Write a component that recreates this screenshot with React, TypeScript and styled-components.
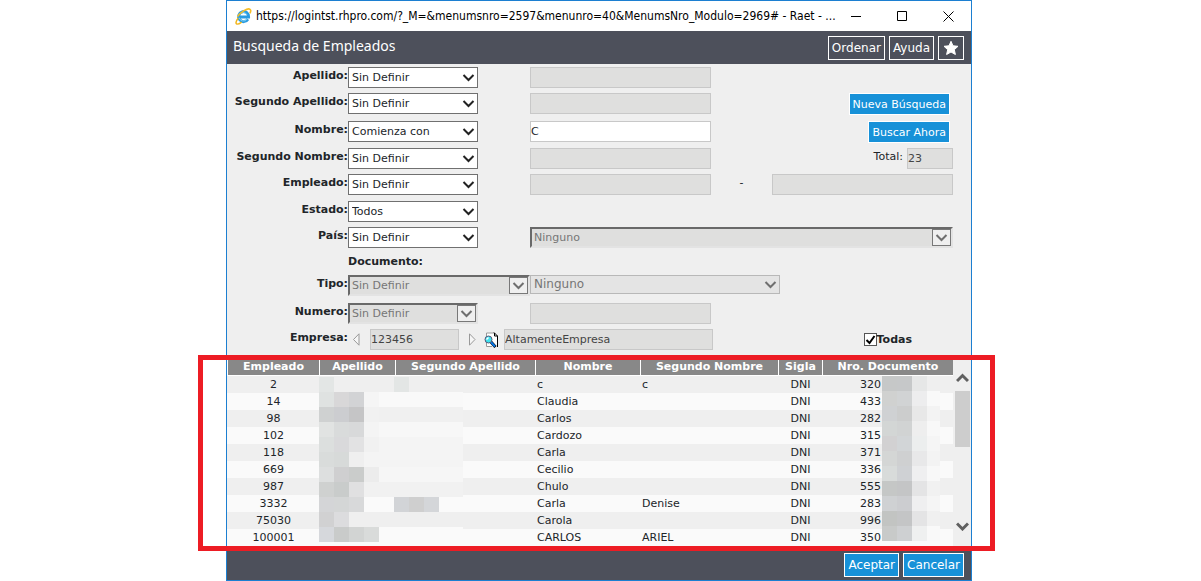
import React from "react";
import styled, { createGlobalStyle, css } from "styled-components";

const GlobalStyle = createGlobalStyle`
  *, *::before, *::after { box-sizing: border-box; }
  body {
    margin: 0;
    background: #fff;
    color: #212529;
    font: 11px/17px "DejaVu Sans", Verdana, sans-serif;
    overflow-x: hidden;
  }
  button, input, select { font: inherit; color: inherit; margin: 0; }
`;

const Page = styled.div`
  display: grid;
  grid-template-columns: minmax(0, 1fr) minmax(0, 746px) minmax(0, 1fr);
  padding-right: 3px;
`;

const Window = styled.main`
  grid-column: 2;
  border: 1px solid #1c7fd1;
  background: #efefef;
`;

const TitleBar = styled.header`
  display: flex;
  align-items: center;
  height: 30px;
  padding-left: 8px;
  background: #fff;
  color: #000;
`;

const Address = styled.span`
  flex: 1;
  min-width: 0;
  margin-left: 4px;
  font: 12px/18px "DejaVu Sans Condensed", Roboto, sans-serif;
  white-space: nowrap;
`;

const WindowButton = styled.button`
  display: grid;
  place-items: center;
  width: 46px;
  height: 28px;
  padding: 0;
  border: 0;
  background: none;
`;

const WindowButtons = styled.div`
  display: flex;
`;

const Bar = styled.div<{ $end?: boolean }>`
  display: flex;
  align-items: center;
  justify-content: ${(p) => (p.$end ? "flex-end" : "space-between")};
  height: ${(p) => (p.$end ? 29 : 33)}px;
  padding: 0 7px ${(p) => (p.$end ? 1 : 0)}px 6px;
  background: #4d505b;
  color: #fff;
`;

const Heading = styled.h1`
  margin: 0;
  padding-bottom: 3px;
  font: 14px/20px "Noto Sans", Tahoma, sans-serif;
`;

const Actions = styled.div`
  display: flex;
  gap: 4px;
`;

const BarButton = styled.button<{ $primary?: boolean }>`
  display: grid;
  place-items: center;
  height: 24px;
  min-width: 26px;
  padding: 0 3px;
  border: 1px solid #fff;
  background: ${(p) => (p.$primary ? "#1791d8" : "transparent")};
  font: 12px/20px "DejaVu Sans", Tahoma, sans-serif;
  color: #fff;
  white-space: nowrap;
`;

const Form = styled.form`
  padding: 3px 18px 0 0;
`;

const Row = styled.div<{ $h: number }>`
  display: grid;
  grid-template-columns: 121px 182px minmax(0, 1fr);
  align-items: start;
  height: ${(p) => p.$h}px;
`;

const Label = styled.label`
  font-weight: bold;
  text-align: right;
  white-space: nowrap;
`;

const Subheading = styled.strong`
  grid-column: 2;
`;

const Cell = styled.div<{ $wide?: boolean }>`
  display: flex;
  align-items: flex-start;
  min-width: 0;
  ${(p) => p.$wide && "grid-column: 2 / -1; align-items: center;"}
`;

const TextBox = styled.input<{ $w: number }>`
  flex: 0 1 ${(p) => p.$w}px;
  width: ${(p) => p.$w}px;
  min-width: 0;
  height: 21px;
  padding: 0;
  border: 1px solid #c8c8c8;
  border-radius: 0;
  background: #fff;
  &:disabled, &:read-only { background: #dfdfde; color: #444; }
`;

const Dash = styled.span`
  flex: 0 0 61px;
  text-align: center;
`;

type Look = "normal" | "inset" | "flat";

const SelectBox = styled.div<{ $w?: number }>`
  display: grid;
  align-items: center;
  justify-items: end;
  ${(p) => (p.$w ? `width: ${p.$w}px;` : "flex: 1; min-width: 0;")}
  > * { grid-area: 1 / 1; }
`;

const NativeSelect = styled.select<{ $look: Look }>`
  appearance: none;
  width: 100%;
  height: 21px;
  padding: 0 24px 0 3px;
  border: 1px solid #707070;
  border-radius: 0;
  background: #fff;
  line-height: 17px;
  opacity: 1;
  ${(p) =>
    p.$look === "inset" &&
    css`
      padding-left: 2px;
      border-width: 2px;
      border-color: #696969 #e3e3e3 #e3e3e3 #696969;
      background: #dfdfde;
      color: #767676;
    `}
  ${(p) =>
    p.$look === "flat" &&
    css`
      height: 19px;
      border-color: #b8b8b8;
      background: #e4e4e4;
      color: #767676;
      font-size: 12px;
    `}
`;

const Arrow = styled.span<{ $boxed: boolean }>`
  display: grid;
  place-items: center;
  width: 19px;
  height: 17px;
  pointer-events: none;
  ${(p) =>
    p.$boxed &&
    css`
      margin-right: 2px;
      border: 1px solid #787878;
      background: #efefef;
    `}
`;

const SearchButton = styled.button`
  height: 22px;
  margin: 0 3px 0 auto;
  padding: 0 3px;
  border: 1px solid #fff;
  background: #1791d8;
  color: #fff;
  white-space: nowrap;
`;

const Total = styled.label`
  margin: 0 4px 0 auto;
`;

const IconButton = styled.button<{ $w: number; $pad: number }>`
  display: grid;
  align-items: center;
  justify-content: start;
  width: ${(p) => p.$w}px;
  height: 21px;
  padding: 0 0 0 ${(p) => p.$pad}px;
  border: 0;
  background: none;
`;

const Check = styled.span`
  display: grid;
  margin-left: auto;
  > * { grid-area: 1 / 1; }
  svg { pointer-events: none; }
`;

const CheckInput = styled.input`
  appearance: none;
  width: 13px;
  height: 13px;
  border: 1px solid #555;
  background: #fff;
  & + svg { visibility: hidden; }
  &:checked + svg { visibility: visible; }
`;

const CheckLabel = styled.label`
  margin-right: 41px;
  font-weight: bold;
`;

const Results = styled.section`
  position: relative;
  display: flex;
  height: 196px;
  padding-top: 3px;
`;

const Table = styled.table`
  flex: 1;
  align-self: flex-start;
  min-width: 0;
  table-layout: fixed;
  border-spacing: 0;
`;

const Th = styled.th<{ $w?: number }>`
  ${(p) => p.$w && `width: ${p.$w}px;`}
  height: 18px;
  padding: 0;
  border: solid #fff;
  border-width: 0 0 1px 1px;
  background: #888;
  color: #fff;
  line-height: 17px;
`;

const Tr = styled.tr`
  background: #efefef;
  &:nth-child(even) { background: #fafafa; }
`;

const Td = styled.td<{ $left?: number }>`
  height: 17px;
  padding: 0 0 0 ${(p) => p.$left ?? 1}px;
  text-align: ${(p) => (p.$left === undefined ? "center" : "left")};
  white-space: nowrap;
`;

const Scroll = styled.div`
  display: flex;
  flex-direction: column;
  align-items: center;
  width: 17px;
  margin-left: 1px;
  padding: 12px 0 20px;
`;

const Thumb = styled.div`
  width: 15px;
  height: 56px;
  margin: 6px 0 auto;
  background: #cdcdcd;
`;

const Mosaic = styled.svg<{ $side: "left" | "right" }>`
  position: absolute;
  ${(p) => (p.$side === "left" ? "left: 92px; top: 22px;" : "right: 31px; top: 21px;")}
`;

const Highlight = styled.div`
  position: absolute;
  inset: 0 -24px 0 -29px;
  border: 5px solid #ed1c24;
  pointer-events: none;
`;

const Chevron = ({ color = "#222" }: { color?: string }) => (
  <svg width="13" height="9" viewBox="0 0 13 9" fill="none" stroke={color} strokeWidth="2">
    <path d="M1.5 2 6.5 7 11.5 2" />
  </svg>
);

const ExplorerIcon = () => (
  <svg width="17" height="17" viewBox="0 0 17 17" fill="none">
    <path d="M12.9 11.2A5 5 0 1 1 13.6 9H4.2" stroke="#2a9be0" strokeWidth="3" />
    <path d="M12.2 11A4.4 4.4 0 0 1 4.2 9.6M4.3 7.1A4.4 4.4 0 0 1 12.2 7" stroke="#7fd2f6" strokeWidth="1" />
    <path d="M3.3 10C.8 13.3.4 15.8 2 16.1c1.2.2 3-.8 4.6-2" stroke="#f1b51c" strokeWidth="1.5" />
    <path d="M2.5 8.5C5.6 4.2 12.6-.4 15 1.3c1.2.9.8 2.4-.2 4" stroke="#f5bd27" strokeWidth="1.6" />
  </svg>
);

const StarIcon = () => (
  <svg width="16" height="16" viewBox="0 0 16 16" fill="#fff" stroke="#fff" strokeLinejoin="round">
    <path d="M8 1.3 10 5.8 15 6.3 11.3 9.7 12.4 14.5 8 12 3.6 14.5 4.7 9.7 1 6.3 6 5.8Z" />
  </svg>
);

const StepIcon = ({ next = false }: { next?: boolean }) => (
  <svg width="7" height="13" viewBox="0 0 7 13" fill="#f6f6f6">
    <path d={next ? "M.5.8V12.2L6 6.5Z" : "M6 .8V12.2L.5 6.5Z"} stroke="#999" />
  </svg>
);

const LookupIcon = () => (
  <svg width="15" height="16" viewBox="0 0 15 16">
    <path d="M2.5 1H10.5L13 3.5V14.5H2.5Z" fill="#fff" />
    <path d="M2.5 4V1H10.5M2.5 11V14.5H8" fill="none" stroke="#999" />
    <path d="M10 .5 13.5 4V15M10.5 1V4H13.5" fill="none" stroke="#000" />
    <path d="M6.5 9.5 11.5 15" stroke="#000" strokeWidth="3" />
    <path d="M6 9 11 14.5" stroke="#0878e8" strokeWidth="2" />
    <circle cx="4.5" cy="7.5" r="3.5" fill="#3fe3ee" stroke="#557" />
    <path d="M2.5 7.5 4.5 5.5" stroke="#fff" strokeWidth="1.5" />
  </svg>
);

function Select({
  id,
  value,
  w,
  look = "normal",
  label,
}: {
  id?: string;
  value: string;
  w?: number;
  look?: Look;
  label?: string;
}) {
  return (
    <SelectBox $w={w}>
      <NativeSelect id={id} aria-label={label} $look={look} disabled={look !== "normal"}>
        <option>{value}</option>
      </NativeSelect>
      <Arrow $boxed={look === "inset"}>
        <Chevron color={look === "normal" ? "#222" : "#6f6f6f"} />
      </Arrow>
    </SelectBox>
  );
}

const columns: [string, number?][] = [
  ["Empleado", 92],
  ["Apellido", 76],
  ["Segundo Apellido", 140],
  ["Nombre", 105],
  ["Segundo Nombre", 138],
  ["Sigla", 44],
  ["Nro. Documento"],
];

const employees = [
  ["2", "c", "c", "320"],
  ["14", "Claudia", "", "433"],
  ["98", "Carlos", "", "282"],
  ["102", "Cardozo", "", "315"],
  ["118", "Carla", "", "371"],
  ["669", "Cecilio", "", "336"],
  ["987", "Chulo", "", "555"],
  ["3332", "Carla", "Denise", "283"],
  ["75030", "Carola", "", "996"],
  ["100001", "CARLOS", "ARIEL", "350"],
];

// Each line holds the tile colours from left to right; "-" leaves a tile clear
// and the first entry is the colour behind the whole strip.
const nameTiles = [
  "- e3e6e5 - - - - e3e6e5",
  "f9f9f9 dfe2e1 d8d7d8 d2d3d5 f5f5f5",
  "f0f0f0 cfd1d1 cccdd0 c5c5c6 f1f1f1",
  "f7f7f7 e1e3e2 d9dbdb d8d9da f4f4f4",
  "f4f4f4 dcdfde d9d9db e2e2e3 f1f1f1",
  "f4f4f4 d9dcdb d7dad9 efefef",
  "f6f6f6 dddfdf cfcfd0 cacccb ececec",
  "f1f1f1 cfd1d0 c9cccb e0e0e1",
  "fafafa d4d5d7 d4d6d6 d8d9da - - d2d4d7 cfcfcf d4d6d9",
  "efefef d1d1d2 dcdcde",
  "fafafa d6d8dc c9cbca d2d4d3 d9dbda",
];

const documentTiles = [
  "- c6c8c8 c6c8c9 e6e7e7 efefef",
  "- d0d1d0 d1d3d4 ededee f9f9f9",
  "- cfd1d3 cccdcd e8e8e8 f3f3f3",
  "- d3d6d5 d1d3d3 eeeeee f8f8f8",
  "- d2d1d2 d2d5d7 eceeee f5f5f5",
  "- d4d6d5 cfd0d1 e8e8e9 f3f3f3",
  "- d8dbda cfd1d4 efeff0 f8f8f8",
  "- c5c7c6 c4c5c6 e4e4e5 f1f1f1",
  "- cfd1d3 cccdd0 efeff0 f5f5f5",
  "- c2c4c2 c4c5c6 e4e4e5 f0f0f0",
  "- c8cac9 ced0d2 eff0f0 f9f9f9",
];

function Tiles({ rows, side, w }: { rows: string[]; side: "left" | "right"; w: number }) {
  return (
    <Mosaic $side={side} width={w} height={165} aria-hidden="true">
      {rows.map((line, y) => {
        const [back, ...tiles] = line.split(" ");
        return (
          <g key={y}>
            {back !== "-" && <rect y={y * 15} width={w} height={15} fill={`#${back}`} />}
            {tiles.map(
              (c, x) =>
                c !== "-" && (
                  <rect key={x} x={x * 15} y={y * 15} width={15} height={15} fill={`#${c}`} />
                )
            )}
          </g>
        );
      })}
    </Mosaic>
  );
}

export default function App() {
  return (
    <>
      <GlobalStyle />
      <Page>
        <Window>
          <TitleBar>
            <ExplorerIcon />
            <Address>
              https://logintst.rhpro.com/?_M=&amp;menumsnro=2597&amp;menunro=40&amp;MenumsNro_Modulo=2969# - Raet - ...
            </Address>
            <WindowButtons>
              <WindowButton aria-label="Minimizar">
                <svg width="11" height="11" stroke="#000"><path d="M0 5.5H10" /></svg>
              </WindowButton>
              <WindowButton aria-label="Maximizar">
                <svg width="11" height="11" stroke="#000" fill="none"><path d="M.5.5H9.5V9.5H.5Z" /></svg>
              </WindowButton>
              <WindowButton aria-label="Cerrar">
                <svg width="11" height="11" stroke="#000"><path d="M.5.5 10.5 10.5M10.5.5.5 10.5" /></svg>
              </WindowButton>
            </WindowButtons>
          </TitleBar>
          <Bar>
            <Heading>Busqueda de Empleados</Heading>
            <Actions>
              <BarButton>Ordenar</BarButton>
              <BarButton>Ayuda</BarButton>
              <BarButton aria-label="Favorito"><StarIcon /></BarButton>
            </Actions>
          </Bar>
          <Form onSubmit={(e) => e.preventDefault()}>
            <Row $h={26}>
              <Label htmlFor="apellido">Apellido:</Label>
              <Select id="apellido" value="Sin Definir" w={130} />
              <Cell><TextBox $w={181} disabled aria-label="Valor de apellido" /></Cell>
            </Row>
            <Row $h={28}>
              <Label htmlFor="apellido2">Segundo Apellido:</Label>
              <Select id="apellido2" value="Sin Definir" w={130} />
              <Cell>
                <TextBox $w={181} disabled aria-label="Valor de segundo apellido" />
                <SearchButton type="reset">Nueva Búsqueda</SearchButton>
              </Cell>
            </Row>
            <Row $h={27}>
              <Label htmlFor="nombre">Nombre:</Label>
              <Select id="nombre" value="Comienza con" w={130} />
              <Cell>
                <TextBox $w={181} defaultValue="C" aria-label="Valor de nombre" />
                <SearchButton type="submit">Buscar Ahora</SearchButton>
              </Cell>
            </Row>
            <Row $h={26}>
              <Label htmlFor="nombre2">Segundo Nombre:</Label>
              <Select id="nombre2" value="Sin Definir" w={130} />
              <Cell>
                <TextBox $w={181} disabled aria-label="Valor de segundo nombre" />
                <Total htmlFor="total">Total:</Total>
                <TextBox id="total" $w={46} readOnly value="23" />
              </Cell>
            </Row>
            <Row $h={27}>
              <Label htmlFor="empleado">Empleado:</Label>
              <Select id="empleado" value="Sin Definir" w={130} />
              <Cell>
                <TextBox $w={181} disabled aria-label="Empleado desde" />
                <Dash>-</Dash>
                <TextBox $w={181} disabled aria-label="Empleado hasta" />
              </Cell>
            </Row>
            <Row $h={26}>
              <Label htmlFor="estado">Estado:</Label>
              <Select id="estado" value="Todos" w={130} />
            </Row>
            <Row $h={26}>
              <Label htmlFor="pais">País:</Label>
              <Select id="pais" value="Sin Definir" w={130} />
              <Cell><Select value="Ninguno" look="inset" label="Valor de país" /></Cell>
            </Row>
            <Row $h={22}>
              <Subheading>Documento:</Subheading>
            </Row>
            <Row $h={28}>
              <Label htmlFor="tipo">Tipo:</Label>
              <Select id="tipo" value="Sin Definir" w={182} look="inset" />
              <Cell><Select value="Ninguno" w={250} look="flat" label="Valor de tipo" /></Cell>
            </Row>
            <Row $h={26}>
              <Label htmlFor="numero">Numero:</Label>
              <Select id="numero" value="Sin Definir" w={130} look="inset" />
              <Cell><TextBox $w={181} disabled aria-label="Valor de numero" /></Cell>
            </Row>
            <Row $h={26}>
              <Label htmlFor="empresa">Empresa:</Label>
              <Cell $wide>
                <IconButton $w={22} $pad={5} type="button" aria-label="Anterior"><StepIcon /></IconButton>
                <TextBox id="empresa" $w={89} readOnly value="123456" />
                <IconButton $w={25} $pad={10} type="button" aria-label="Siguiente"><StepIcon next /></IconButton>
                <IconButton $w={20} $pad={0} type="button" aria-label="Buscar empresa"><LookupIcon /></IconButton>
                <TextBox $w={209} readOnly value="AltamenteEmpresa" aria-label="Nombre de empresa" />
                <Check>
                  <CheckInput type="checkbox" id="todas" defaultChecked />
                  <svg width="13" height="13" fill="none" stroke="#000" strokeWidth="2">
                    <path d="M2.5 7 5.5 10 10.5 3" />
                  </svg>
                </Check>
                <CheckLabel htmlFor="todas">Todas</CheckLabel>
              </Cell>
            </Row>
          </Form>
          <Results>
            <Table>
              <thead>
                <tr>
                  {columns.map(([name, w]) => (
                    <Th key={name} $w={w}>{name}</Th>
                  ))}
                </tr>
              </thead>
              <tbody>
                {employees.map(([id, first, second, doc]) => (
                  <Tr key={id}>
                    <Td>{id}</Td>
                    <Td />
                    <Td />
                    <Td $left={2}>{first}</Td>
                    <Td $left={2}>{second}</Td>
                    <Td>DNI</Td>
                    <Td $left={38}>{doc}</Td>
                  </Tr>
                ))}
              </tbody>
            </Table>
            <Scroll>
              <svg width="13" height="15" viewBox="0 -3 13 15" fill="none" stroke="#606060" strokeWidth="3">
                <path d="M1 8 6.5 2.5 12 8" />
              </svg>
              <Thumb />
              <svg width="13" height="9" viewBox="0 0 13 9" fill="none" stroke="#606060" strokeWidth="3">
                <path d="M1 1.5 6.5 7 12 1.5" />
              </svg>
            </Scroll>
            <Tiles rows={nameTiles} side="left" w={144} />
            <Tiles rows={documentTiles} side="right" w={58} />
            <Highlight />
          </Results>
          <Bar $end>
            <Actions>
              <BarButton $primary>Aceptar</BarButton>
              <BarButton $primary>Cancelar</BarButton>
            </Actions>
          </Bar>
        </Window>
      </Page>
    </>
  );
}
